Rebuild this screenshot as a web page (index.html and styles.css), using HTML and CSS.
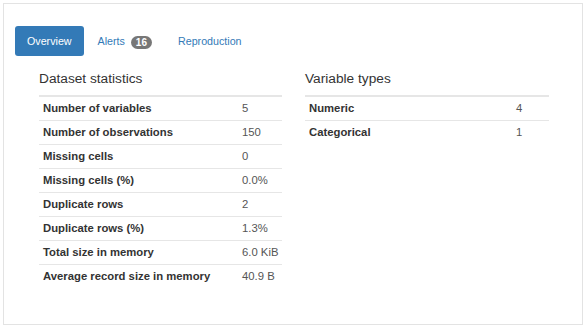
FILE: index.html
```html
<!DOCTYPE html>
<html lang="en">
<head>
    <meta charset="UTF-8">
    <title>Overview</title>
    <link rel="stylesheet" href="styles.css">
</head>
<body>

<div class="panel">
    <ul class="nav-pills">
        <li class="active"><a href="#">Overview</a></li>
        <li><a href="#">Alerts <span class="badge">16</span></a></li>
        <li><a href="#">Reproduction</a></li>
    </ul>

    <div class="overview">
        <div class="col">
            <p class="h4">Dataset statistics</p>
            <table class="stats left">
                <tr><th>Number of variables</th><td>5</td></tr>
                <tr><th>Number of observations</th><td>150</td></tr>
                <tr><th>Missing cells</th><td>0</td></tr>
                <tr><th>Missing cells (%)</th><td>0.0%</td></tr>
                <tr><th>Duplicate rows</th><td>2</td></tr>
                <tr><th>Duplicate rows (%)</th><td>1.3%</td></tr>
                <tr><th>Total size in memory</th><td>6.0 KiB</td></tr>
                <tr><th>Average record size in memory</th><td>40.9 B</td></tr>
            </table>
        </div>
        <div class="col">
            <p class="h4">Variable types</p>
            <table class="stats right">
                <tr><th>Numeric</th><td>4</td></tr>
                <tr><th>Categorical</th><td>1</td></tr>
            </table>
        </div>
    </div>
</div>

</body>
</html>
```

FILE: styles.css
```css
body {
    margin: 0;
    font-family: 'Liberation Sans', Arial, sans-serif;
    color: #333;
    background-color: #fff;
}
.panel {
    margin: 3px 0 0 3px;
    width: 580px;
    height: 322px;
    box-sizing: border-box;
    border: 1px solid #e3e3e3;
    padding: 22px 11px;
}
.nav-pills {
    list-style: none;
    margin: 0;
    padding: 0;
    display: flex;
}
.nav-pills li {
    margin-right: 2px;
}
.nav-pills a {
    display: block;
    height: 30px;
    line-height: 30px;
    padding: 0 12px;
    font-size: 10.7px;
    color: #337ab7;
    text-decoration: none;
    border-radius: 3px;
}
.nav-pills .active a {
    background-color: #337ab7;
    color: #fff;
}
.badge {
    display: inline-block;
    margin-left: 3px;
    padding: 0 5px;
    height: 13px;
    line-height: 13px;
    font-size: 10px;
    font-weight: bold;
    color: #fff;
    background-color: #777;
    border-radius: 7px;
    vertical-align: -1px;
}
.overview {
    display: grid;
    grid-template-columns: 243px 244px;
    column-gap: 23px;
    padding-left: 24px;
    margin-top: 15px;
}
.h4 {
    margin: 0 0 9px;
    font-size: 13.7px;
    line-height: 15px;
    font-weight: normal;
}
.stats {
    width: 100%;
    border-collapse: collapse;
    font-size: 11.3px;
    border-top: 2px solid #e6e6e6;
}
.stats th,
.stats td {
    height: 24px;
    padding: 0 4px;
    box-sizing: border-box;
    text-align: left;
    vertical-align: middle;
    white-space: nowrap;
    border-top: 1px solid #e6e6e6;
}
.stats tr:first-child th,
.stats tr:first-child td {
    border-top: none;
}
.stats th {
    font-weight: bold;
    color: #333;
}
.stats td {
    color: #555;
    padding-right: 0;
}
.left th {
    width: 199px;
}
.right th {
    width: 207px;
}
```
